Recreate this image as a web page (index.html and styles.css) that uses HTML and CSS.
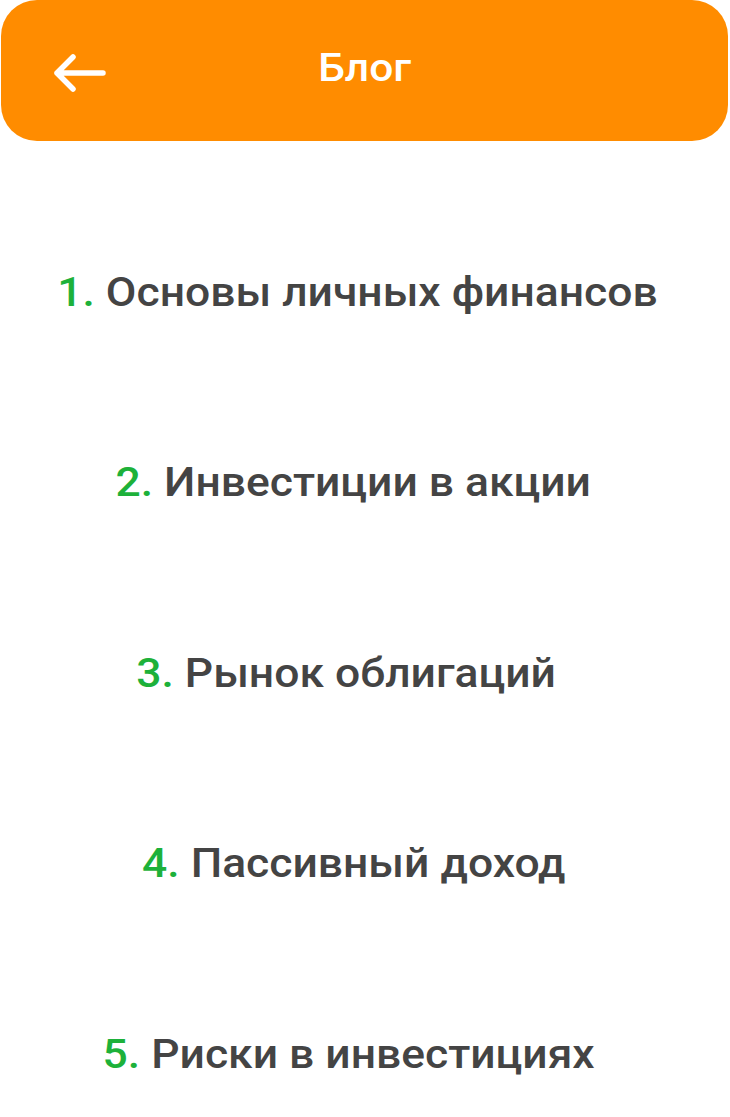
FILE: index.html
```html
<!DOCTYPE html>
<html lang="ru">
<head>
<meta charset="utf-8">
<title>Блог</title>
<link rel="stylesheet" href="styles.css">
</head>
<body>
<header class="topbar">
  <div class="topbar-left">
    <svg class="back-icon" width="56" height="40" viewBox="0 0 56 40" aria-hidden="true">
      <path d="M51 20 H5 M21 4 L5 20 L21 36" fill="none" stroke="#fff" stroke-width="5.5" stroke-linecap="round" stroke-linejoin="round"/>
    </svg>
  </div>
  <h1 class="topbar-title">Блог</h1>
  <div class="topbar-right"></div>
</header>
<ol class="topics">
  <li class="topic"><span class="label"><span class="num">1.</span> Основы личных финансов</span></li>
  <li class="topic"><span class="label"><span class="num">2.</span> Инвестиции в акции</span></li>
  <li class="topic"><span class="label"><span class="num">3.</span> Рынок облигаций</span></li>
  <li class="topic"><span class="label"><span class="num">4.</span> Пассивный доход</span></li>
  <li class="topic"><span class="label"><span class="num">5.</span> Риски в инвестициях</span></li>
</ol>
</body>
</html>
```
FILE: styles.css
```css
html, body {
  margin: 0;
  padding: 0;
  background: #fff;
}
body {
  font-family: Roboto, "Noto Sans", sans-serif;
  width: 730px;
}
.topbar {
  margin: 0 2px 0 1px;
  height: 141px;
  background: #ff8c00;
  border-radius: 36px;
  display: grid;
  grid-template-columns: 1fr auto 1fr;
  align-items: center;
}
.topbar-left {
  padding-left: 51px;
  padding-top: 5px;
  display: flex;
  align-items: center;
}
.back-icon {
  display: block;
}
.topbar-title {
  margin: 0 0 4px;
  color: #fff;
  font-size: 39px;
  font-weight: 500;
  line-height: 1.2;
  transform: scaleX(1.09);
}
.topics {
  list-style: none;
  margin: 0;
  padding: 56px 0 0;
  display: grid;
  grid-auto-rows: 190.5px;
}
.topic {
  display: flex;
  align-items: center;
  justify-content: center;
  font-size: 40px;
  font-weight: 500;
  color: #444444;
  white-space: pre;
}
.label {
  display: inline-block;
  transform: scaleX(1.11);
}
.topic:nth-child(1) { padding-right: 15px; }
.topic:nth-child(2) { padding-right: 24px; }
.topic:nth-child(3) { padding-right: 38px; }
.topic:nth-child(4) { padding-right: 23px; }
.topic:nth-child(5) { padding-right: 33px; }
.num {
  color: #1db13a;
}
```
